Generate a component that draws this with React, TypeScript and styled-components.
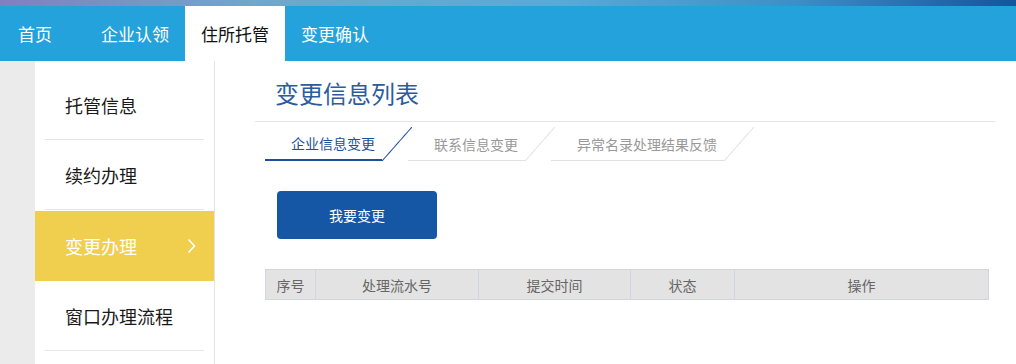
import { createGlobalStyle, styled } from 'styled-components'

const GlobalStyle = createGlobalStyle`
  html, body {
    margin: 0;
    padding: 0;
    background: #fff;
  }
  body {
    font-family: "Noto Sans CJK SC", "Liberation Sans", sans-serif;
  }
  * {
    box-sizing: border-box;
  }
`

const navItems = ['首页', '企业认领', '住所托管', '变更确认']
const menuItems = ['托管信息', '续约办理', '变更办理', '窗口办理流程']
const tabs = ['企业信息变更', '联系信息变更', '异常名录处理结果反馈']
const columns = [
  { title: '序号', width: 50 },
  { title: '处理流水号', width: 163 },
  { title: '提交时间', width: 152 },
  { title: '状态', width: 104 },
  { title: '操作', width: 254 },
]

export default function App(): JSX.Element {
  return (
    <>
      <GlobalStyle />
      <Page>
        <TopStrip />
        <NavBar>
          {navItems.map((item, i) => (
            <NavItem key={item} $active={i === 2} $first={i === 0}>
              {item}
            </NavItem>
          ))}
        </NavBar>
        <Body>
          <Rail />
          <Sidebar>
            {menuItems.map((item, i) => (
              <MenuItem key={item} $active={i === 2}>
                <MenuLabel>{item}</MenuLabel>
                {i === 2 && (
                  <svg width="9" height="16" viewBox="0 0 9 16">
                    <polyline points="1.5,1.5 7.5,8 1.5,14.5" fill="none" stroke="#fff" strokeWidth="1.6" />
                  </svg>
                )}
              </MenuItem>
            ))}
          </Sidebar>
          <Main>
            <TitleBar>
              <Title>变更信息列表</Title>
            </TitleBar>
            <Content>
              <Tabs>
                {tabs.map((tab, i) => (
                  <Tab key={tab}>
                    <TabLabel $active={i === 0}>{tab}</TabLabel>
                    <TabSlash $active={i === 0} />
                  </Tab>
                ))}
              </Tabs>
              <ChangeButton type="button">我要变更</ChangeButton>
              <Table>
                <thead>
                  <tr>
                    {columns.map((c) => (
                      <Th key={c.title} style={{ width: c.width }}>
                        {c.title}
                      </Th>
                    ))}
                  </tr>
                </thead>
              </Table>
            </Content>
          </Main>
        </Body>
      </Page>
    </>
  )
}

const Page = styled.div`
  min-height: 100vh;
  display: flex;
  flex-direction: column;
`

const TopStrip = styled.div`
  height: 6px;
  background: linear-gradient(
    to right,
    #8080c0 0%,
    #72a6cb 25%,
    #55acd8 55%,
    #3a91c8 78%,
    #15549c 100%
  );
`

const NavBar = styled.nav`
  display: flex;
  height: 55px;
  background: #23a2dc;
`

const NavItem = styled.div<{ $active?: boolean; $first?: boolean }>`
  display: flex;
  align-items: center;
  padding: ${(p) => (p.$first ? '0 16px 0 18px' : '0 16px')};
  margin-right: ${(p) => (p.$first ? '17px' : '0')};
  font-size: 17px;
  color: ${(p) => (p.$active ? '#111' : '#fff')};
  background: ${(p) => (p.$active ? '#fff' : 'transparent')};
`

const Body = styled.div`
  flex: 1;
  display: flex;
`

const Rail = styled.div`
  width: 35px;
  flex: none;
  background: #ebebeb;
`

const Sidebar = styled.aside`
  width: 180px;
  flex: none;
  padding-top: 9px;
  border-right: 1px solid #e3e3e3;
`

const MenuItem = styled.div<{ $active?: boolean }>`
  position: relative;
  display: flex;
  align-items: center;
  justify-content: space-between;
  height: 70px;
  padding: 0 18px 0 30px;
  margin-top: ${(p) => (p.$active ? '1px' : '0')};
  background: ${(p) => (p.$active ? '#f0cf4f' : 'transparent')};
  color: ${(p) => (p.$active ? '#fff' : '#1a1a1a')};

  &::after {
    content: '';
    position: absolute;
    left: 10px;
    right: 10px;
    bottom: 0;
    border-bottom: 1px solid ${(p) => (p.$active ? 'transparent' : '#e6e6e6')};
  }
`

const MenuLabel = styled.span`
  font-size: 18px;
`

const Main = styled.main`
  flex: 1;
  padding: 0 21px 0 40px;
`

const TitleBar = styled.div`
  height: 61px;
  display: flex;
  align-items: center;
  padding: 2px 0 0 20px;
  border-bottom: 1px solid #e5e5e5;
`

const Title = styled.h1`
  margin: 0;
  font-size: 24px;
  font-weight: normal;
  color: #2c5c9e;
`

const Content = styled.div`
  padding: 5px 0 0 10px;
`

const Tabs = styled.div`
  display: flex;
`

const Tab = styled.div`
  display: flex;
  margin-right: -4px;
`

const TabLabel = styled.div<{ $active?: boolean }>`
  height: 34px;
  display: flex;
  align-items: center;
  padding: 0 7px 0 26px;
  font-size: 14px;
  color: ${(p) => (p.$active ? '#1c4f9c' : '#999')};
  border-bottom: ${(p) => (p.$active ? '2px solid #1c4f9c' : '1px solid #e2e2e2')};
`

const TabSlash = styled.div<{ $active?: boolean }>`
  width: 30px;
  height: 34px;
  background: linear-gradient(
    to bottom right,
    transparent calc(50% - 1px),
    ${(p) => (p.$active ? '#1c4f9c' : '#e2e2e2')} 50%,
    transparent calc(50% + 1px)
  );
`

const ChangeButton = styled.button`
  display: block;
  width: 160px;
  height: 48px;
  margin: 30px 0 0 12px;
  border: none;
  border-radius: 4px;
  background: #1557a5;
  color: #fff;
  font-family: inherit;
  font-size: 14px;
`

const Table = styled.table`
  margin-top: 30px;
  width: 723px;
  border-collapse: collapse;
  table-layout: fixed;
`

const Th = styled.th`
  height: 30px;
  padding: 0;
  background: #e3e3e3;
  border: 1px solid #cfd6e0;
  font-size: 14px;
  font-weight: normal;
  color: #666;
`
